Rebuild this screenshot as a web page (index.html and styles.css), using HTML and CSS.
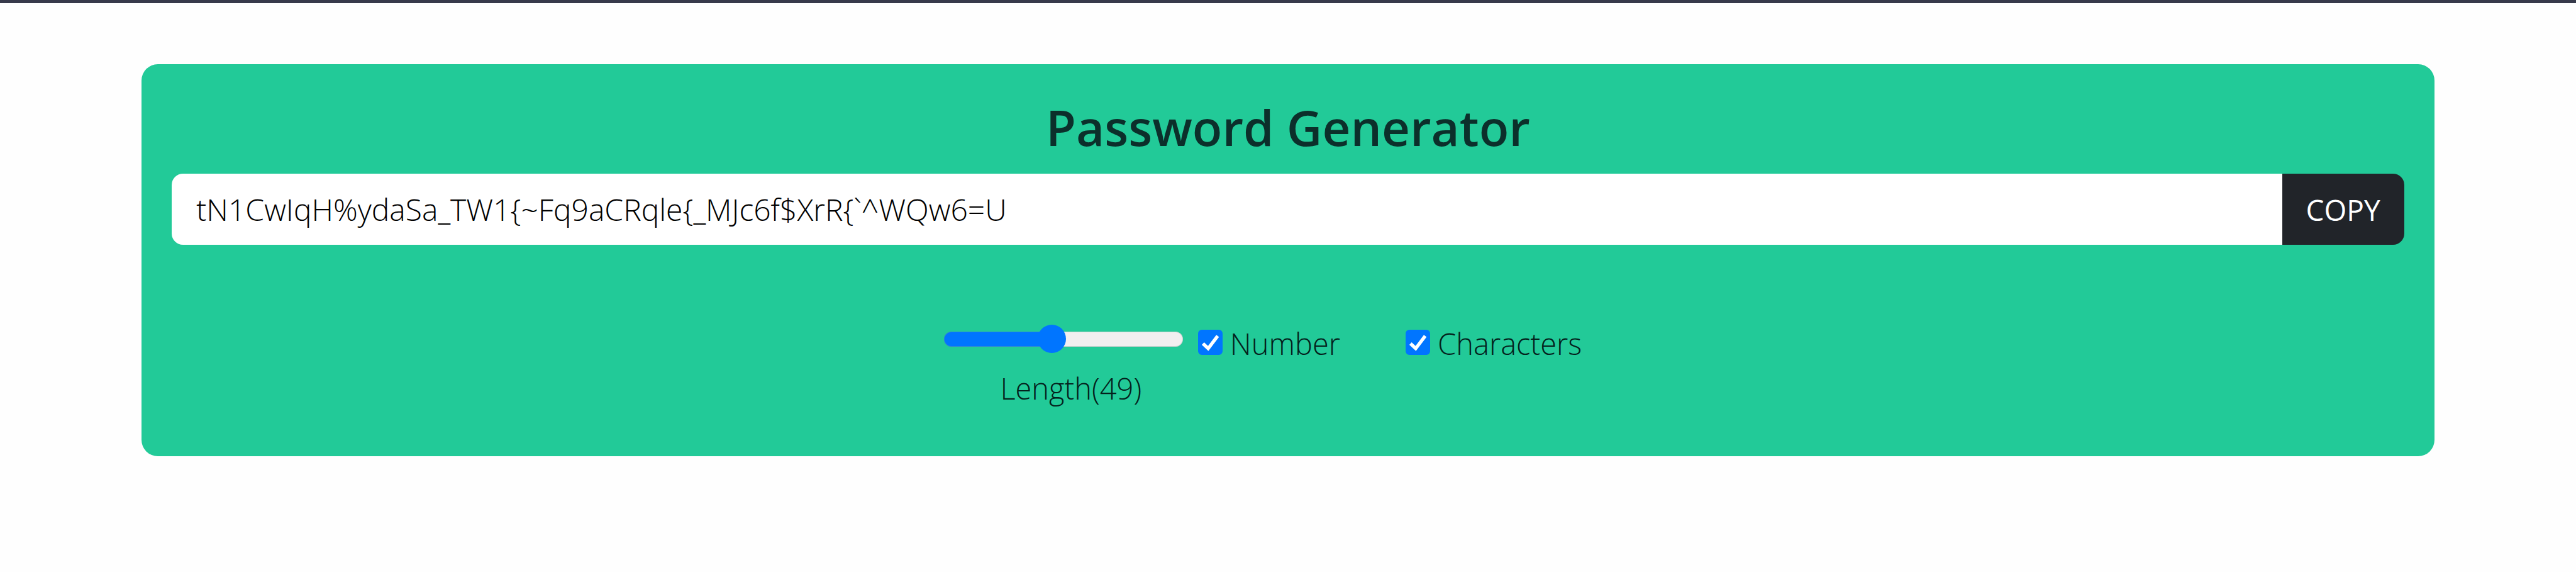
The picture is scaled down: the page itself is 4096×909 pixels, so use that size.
FILE: index.html
```html
<!DOCTYPE html>
<html lang="en">
<head>
<meta charset="utf-8">
<title>Password Generator</title>
<link rel="stylesheet" href="styles.css">
</head>
<body>
<main class="card">
  <h1 class="title">Password Generator</h1>
  <div class="field">
    <input class="password" type="text" aria-label="Password" readonly value="tN1CwIqH%ydaSa_TW1{~Fq9aCRqle{_MJc6f$XrR{`^WQw6=U">
    <button class="copy" type="button">COPY</button>
  </div>
  <div class="controls">
    <div class="length">
      <input class="slider" id="length" type="range" min="8" max="100" value="49">
      <label class="length-label" for="length">Length(49)</label>
    </div>
    <div class="option">
      <input class="check" id="number" type="checkbox" checked>
      <label for="number">Number</label>
    </div>
    <div class="option">
      <input class="check" id="characters" type="checkbox" checked>
      <label for="characters">Characters</label>
    </div>
  </div>
</main>
</body>
</html>
```
FILE: styles.css
```css
* {
  box-sizing: border-box;
}

body {
  margin: 0;
  border-top: 5px solid #373a4b;
  background: #fefefe;
  color: #0c2f2b;
  font-family: "Open Sans", "Noto Sans", sans-serif;
  font-size: 48px;
  font-weight: 300;
  line-height: 70px;
}

.card {
  margin: 97px 5.5vw 0;
  padding: 48px;
  border-radius: 26px;
  background: #22ca98;
}

.title {
  margin: 0 0 22px;
  font-size: 78px;
  font-weight: 600;
  line-height: 104px;
  text-align: center;
}

.field {
  display: flex;
  height: 113px;
  border-radius: 18px;
  overflow: hidden;
}

.password {
  flex: 1;
  min-width: 0;
  padding: 0 39px;
  border: 0;
  background: #fff;
  color: #000;
  font: inherit;
  outline: 0;
}

.copy {
  padding: 0 38px;
  border: 0;
  background: #212429;
  color: #fff;
  font: inherit;
  font-size: 46px;
  font-weight: 400;
}

.controls {
  display: flex;
  justify-content: center;
  align-items: flex-start;
  padding: 122px 0 25px;
  color: #04211c;
  font-size: 47px;
}

.length {
  display: flex;
  flex-direction: column;
  align-items: center;
}

.slider {
  width: 380px;
  height: 46px;
  margin: 5px 24px 20px 0;
  appearance: none;
  background: none;
}

.slider::-webkit-slider-runnable-track {
  height: 24px;
  border-radius: 12px;
  background: linear-gradient(to right, #0075ff 45%, #f1eff0 45%);
  box-shadow: inset 0 0 0 1px #8a9a9455;
}

.slider::-webkit-slider-thumb {
  width: 45px;
  height: 45px;
  margin-top: -11px;
  appearance: none;
  border-radius: 50%;
  background: #0075ff;
}

.option {
  display: flex;
  align-items: center;
  gap: 12px;
  padding-right: 80px;
  margin-right: 24px;
}

.option:last-child {
  margin-right: 0;
}

.check {
  width: 39px;
  height: 40px;
  margin: 0 0 4px;
  appearance: none;
  border-radius: 6px;
  background: #fff;
}

.check:checked {
  background: #0075ff url("data:image/svg+xml,%3Csvg xmlns='http://www.w3.org/2000/svg' viewBox='0 0 40 40'%3E%3Cpath d='M8 21.5l8.5 8L32 9' fill='none' stroke='white' stroke-width='5.5'/%3E%3C/svg%3E") center / contain no-repeat;
}
```
